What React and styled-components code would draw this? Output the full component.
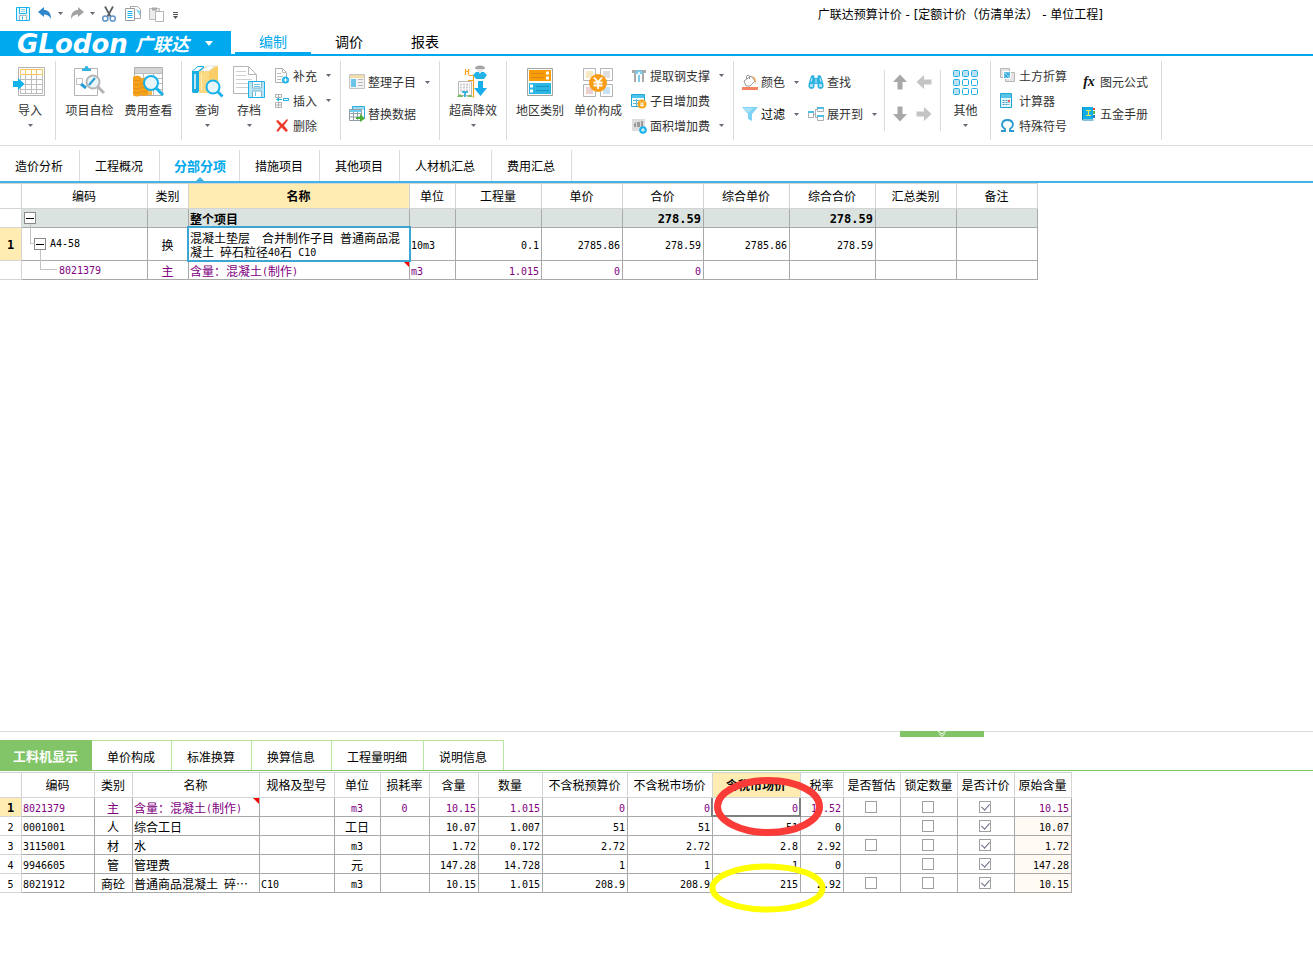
import React from 'react';
import styled, { createGlobalStyle, css } from 'styled-components';

const BLUE = '#00a8ee';
const CYAN = '#19b2ea';
const GREY = '#b4b4b4';
const ORANGE = '#f7a21b';
const HIGHLIGHT = '#ffecb3';
const GREEN = '#82c569';

const GlobalStyle = createGlobalStyle`
  * { box-sizing: border-box; }
  body {
    margin: 0;
    background: #fff;
    color: #000;
    font-family: 'Noto Sans CJK SC', 'Liberation Sans', sans-serif;
    font-size: 12px;
    line-height: 18px;
  }
  button {
    margin: 0;
    padding: 0;
    border: 0;
    background: none;
    font: inherit;
    color: inherit;
    white-space: nowrap;
  }
  svg { display: block; flex: none; }
`;

const Page = styled.div`
  min-height: 100vh;
  display: flex;
  flex-direction: column;
  overflow: hidden;
`;

/* ---------- title bar ---------- */

const TitleBar = styled.header`
  height: 31px;
  display: flex;
  align-items: center;
  padding: 0 210px 4px 15px;
`;
const QuickAccess = styled.div`
  flex: 1;
  display: flex;
  gap: 6px;
`;
const QuickGroup = styled.div`
  display: flex;
  gap: 8px;
`;
const QuickButton = styled.button`
  display: flex;
  align-items: center;
  gap: 5px;
`;
const Title = styled.h1`
  margin: 0;
  padding-top: 2px;
  font-family: 'DejaVu Sans', 'Noto Sans CJK SC', sans-serif;
  font-size: 12px;
  font-weight: 400;
  white-space: pre;
`;

/* ---------- brand and main menu ---------- */

const MenuBar = styled.nav`
  display: flex;
  height: 25px;
  border-bottom: 2px solid ${BLUE};
`;
const Brand = styled.button`
  display: flex;
  align-items: center;
  width: 231px;
  height: 25px;
  padding-left: 17px;
  margin-right: 4px;
  background: ${BLUE};
  color: #fff;
  font-weight: 700;
  font-style: italic;
`;
const BrandLatin = styled.span`
  width: 118px;
  text-align: left;
  font-family: 'DejaVu Sans', sans-serif;
  font-size: 26px;
  line-height: 24px;
`;
const BrandHan = styled.span`
  width: 70px;
  text-align: left;
  font-size: 18px;
  line-height: 24px;
  padding-bottom: 2px;
`;
const MenuTab = styled.button`
  width: 76px;
  height: 23px;
  font-size: 14px;
  line-height: 20px;
  padding-bottom: 2px;
  color: ${(p) => (p.$active ? BLUE : '#000')};
  border-bottom: 2px solid ${(p) => (p.$active ? BLUE : 'transparent')};
`;

/* ---------- ribbon ---------- */

const Ribbon = styled.div`
  display: flex;
  padding: 5px 0;
  height: 90px;
  border-bottom: 1px solid #dcdcdc;
  color: #333;
`;
const Divider = styled.div`
  flex: none;
  width: 1px;
  height: ${(p) => (p.$short ? 61 : 79)}px;
  align-self: center;
  background: #dcdcdc;
`;
const Group = styled.div`
  flex: none;
  display: flex;
  width: ${(p) => p.$w}px;
  padding-left: ${(p) => p.$pad || 0}px;
`;
const Big = styled.button`
  width: ${(p) => p.$w}px;
  height: 79px;
  padding-top: 4px;
  display: flex;
  flex-direction: column;
  align-items: center;
`;
const BigLabel = styled.span`
  margin: 2px 0 5px;
`;
const Stack = styled.div`
  display: flex;
  flex-direction: column;
  padding-top: ${(p) => (p.$rows === 2 ? 5 : 2)}px;
  margin-left: ${(p) => p.$gap || 0}px;
  & > button { height: ${(p) => (p.$rows === 2 ? 32 : 25)}px; }
`;
const Small = styled.button`
  display: flex;
  align-items: center;
  gap: 3px;
  color: ${(p) => (p.$dark ? '#000' : 'inherit')};
`;
const CaretSlot = styled.span`
  margin-left: 6px;
`;
const ArrowPad = styled.div`
  display: grid;
  grid-template-columns: 24px 24px;
  grid-auto-rows: 32px;
  padding-top: 5px;
  & > button { display: grid; place-items: center; }
`;

/* ---------- tab strips ---------- */

const SectionTabs = styled.nav`
  display: flex;
  align-items: flex-end;
  height: 37px;
  border-bottom: 2px solid #41b4e4;
`;
const SectionTab = styled.button`
  position: relative;
  height: 31px;
  padding: 0 ${(p) => (p.$active ? 13 : 16)}px 0 ${(p) => (p.$active ? 14 : 15)}px;
  border-right: 1px solid #dcdcdc;
  ${(p) => p.$active && css`
    color: ${BLUE};
    font-size: 13px;
    font-weight: 700;
    &::after {
      content: '';
      position: absolute;
      left: 50%;
      bottom: 0;
      margin-left: -4px;
      border: 4px solid transparent;
      border-top: 0;
      border-bottom-color: #41b4e4;
    }
  `}
`;
const DetailTabs = styled.nav`
  display: flex;
  height: 31px;
  margin-top: 3px;
  border-bottom: 1px solid ${GREEN};
`;
const DetailTab = styled.button`
  padding: 3px 16px 0 15px;
  border-top: 1px solid #b9e3a0;
  border-right: 1px solid #b9e3a0;
  ${(p) => p.$active && css`
    padding: 1px 13px 0;
    background: ${GREEN};
    border-color: ${GREEN};
    color: #fff;
    font-size: 13px;
    font-weight: 700;
  `}
`;

/* ---------- data tables ---------- */

const Workspace = styled.main`
  flex: 1;
`;
const DetailPanel = styled.section`
  min-height: 226px;
`;
const Splitter = styled.div`
  height: 6px;
  border-top: 1px solid #dcdcdc;
`;
const SplitterGrip = styled.button`
  display: grid;
  place-items: center;
  width: 84px;
  height: 6px;
  margin: -1px 0 0 900px;
  background: ${GREEN};
`;
const TableArea = styled.div`
  position: relative;
  margin-top: ${(p) => p.$gap || 0}px;
`;
const Table = styled.table`
  table-layout: fixed;
  width: ${(p) => p.$w}px;
  border-collapse: separate;
  border-spacing: 0;
  border-top: 1px solid #d4d4d4;
`;
const Th = styled.th`
  height: 25px;
  padding: 0 1px 0 0;
  border-right: 1px solid #d4d4d4;
  border-bottom: 1px solid #d4d4d4;
  font-weight: ${(p) => (p.$active ? 700 : 400)};
  background: ${(p) => (p.$active ? HIGHLIGHT : '#fff')};
  white-space: nowrap;
`;
const Tr = styled.tr`
  height: ${(p) => p.$h || 19}px;
  color: ${(p) => (p.$purple ? '#800080' : '#000')};
  background: ${(p) => (p.$total ? '#dae3df' : '#fff')};
  font-weight: ${(p) => (p.$total ? 700 : 400)};
`;
const Td = styled.td`
  position: relative;
  padding: ${(p) => (p.$box ? '0 2px 0 0' : '2px 2px 0 1px')};
  border-right: 1px solid #a9a9a9;
  border-bottom: 1px solid #a9a9a9;
  line-height: 14px;
  text-align: ${(p) => p.$align || 'left'};
  white-space: pre;
  background: ${(p) => (p.$tint ? '#fffaf4' : 'transparent')};
  ${(p) => p.$editing && css`
    &::after {
      content: '';
      position: absolute;
      inset: -2px;
      border: 2px solid #3ba5d3;
      z-index: 1;
    }
  `}
  ${(p) => p.$focused && css`
    &::after {
      content: '';
      position: absolute;
      inset: 0 -1px -1px -2px;
      border: 2px solid #808080;
      border-top: 0;
    }
  `}
  ${(p) => p.$noted && css`
    &::before {
      content: '';
      position: absolute;
      top: 0;
      right: 0;
      border-top: 6px solid #f00;
      border-left: 6px solid transparent;
    }
  `}
`;
const RowHead = styled.th`
  padding: 2px 0 0;
  border-right: 1px solid #d4d4d4;
  border-bottom: 1px solid #d4d4d4;
  line-height: 14px;
  font-weight: ${(p) => (p.$active ? 700 : 400)};
  color: #000;
  background: ${(p) => (p.$active ? HIGHLIGHT : '#fff')};
`;
const Mono = styled.span`
  font-family: 'DejaVu Sans Mono', monospace;
  font-size: ${(p) => (p.$strong ? 12 : 10)}px;
  line-height: 10px;
  vertical-align: 1px;
`;
const TreeRow = styled.div`
  display: flex;
  align-items: center;
  gap: 4px;
  padding-left: ${(p) => p.$indent}px;
`;
const Expander = styled.button`
  display: grid;
  place-items: center;
  width: 12px;
  height: 12px;
  border: 1px solid #8a8a8a;
  background: #fff;
`;
const Branch = styled.span`
  position: absolute;
  left: ${(p) => p.$x}px;
  top: ${(p) => p.$top || 0}px;
  width: ${(p) => p.$w}px;
  height: ${(p) => p.$h}px;
  border-left: 1px solid #c4c4c4;
  border-bottom: ${(p) => (p.$w > 1 ? '1px solid #c4c4c4' : '0')};
`;
const Check = styled.input`
  appearance: none;
  display: block;
  position: relative;
  width: 12px;
  height: 12px;
  margin: 0 auto;
  border: 1px solid #a0a0a0;
  background: #fff;
  &:checked::after {
    content: '';
    position: absolute;
    left: 3px;
    top: 0;
    width: 4px;
    height: 7px;
    border: solid #6a6f85;
    border-width: 0 1px 1px 0;
    transform: rotate(42deg);
  }
`;
const Marks = styled.svg`
  position: absolute;
  left: 700px;
  top: 0;
  z-index: 2;
  pointer-events: none;
`;

/* ---------- icons ---------- */

const Caret = ({ color = '#666a76' }) => (
  <svg width="5" height="3" viewBox="0 0 5 3"><path d="M0 0h5L2.5 3z" fill={color} /></svg>
);
const Svg = ({ s = 34, children }) => (
  <svg width={s} height={s} viewBox={`0 0 ${s} ${s}`} fill="none">{children}</svg>
);
const Lens = ({ x, y, r = 6.5, len = 12, color = CYAN }) => (
  <g>
    <circle cx={x} cy={y} r={r} fill="#e8f5fb" stroke={color} strokeWidth="2" />
    <path d={`M${x + r * 0.7} ${y + r * 0.7}L${x + len} ${y + len}`} stroke={color} strokeWidth="3" />
  </g>
);

const SaveIcon = () => (
  <Svg s={16}>
    <path d="M1.500 1.500h13v13h-13z" stroke={CYAN} fill="#e3f5fc" />
    <path d="M4.500 2v5.500h7V2" stroke={CYAN} fill="#fff" />
    <path d="M6 3.500h4M6 5.500h4" stroke="#7ccbe8" />
    <path d="M4.500 14v-4.500h7V14" stroke="#a8b4ba" fill="#fff" />
    <path d="M7.500 10.500v3" stroke={CYAN} />
  </Svg>
);
const UndoIcon = ({ flip, color }) => (
  <Svg s={16}>
    <g transform={flip ? 'matrix(-1 0 0 1 16 0)' : undefined}>
      <path d="M1 6l6-5v3c4 0 7 2.500 7 9-2-3.500-4-4.500-7-4.500V11z" fill={color} />
    </g>
  </Svg>
);
const CutIcon = () => (
  <Svg s={16}>
    <path d="M4 0.500l5.500 10M12 0.500l-5.500 10" stroke="#5d6066" strokeWidth="1.800" />
    <circle cx="4.300" cy="12.500" r="2.600" stroke="#5f93c4" strokeWidth="1.500" />
    <circle cx="11.700" cy="12.500" r="2.600" stroke="#5f93c4" strokeWidth="1.500" />
  </Svg>
);
const CopyIcon = () => (
  <Svg s={16}>
    <path d="M5.500 0.500h7l3 3v9h-10z" fill="#fff" stroke="#a9a9a9" />
    <path d="M11 3l4 2v5z" fill="#7fd3f3" />
    <path d="M0.500 2.500h9v12h-9z" fill="#fff" stroke="#9a9a9a" />
    <path d="M2.500 5.500h5M2.500 7.500h5M2.500 9.500h5M2.500 11.500h5" stroke={CYAN} />
  </Svg>
);
const PasteIcon = () => (
  <Svg s={16}>
    <path d="M0.500 2.500h10v11h-10z" fill="#ececec" stroke="#bcbcbc" />
    <path d="M3 1.500h5v3H3z" fill="#a9a9a9" />
    <path d="M6.500 5.500h8v10h-8z" fill="#fff" stroke="#b4b4b4" />
  </Svg>
);
const MoreIcon = () => (
  <Svg s={16}>
    <path d="M0 6.500h5M0 8.500h5" stroke="#555" /><path d="M0 10h5l-2.500 3z" fill="#555" />
  </Svg>
);

const ImportIcon = () => (
  <Svg>
    <path d="M5.500 2.500h26v28h-26z" stroke={GREY} />
    <path d="M7 14.500h23M7 19.500h23M7 24.500h23M7 28.500h23M12.500 10v19M18.500 10v19M23.500 10v19M29.500 10v19M7.500 10v19" stroke="#bdbdbd" />
    <path d="M7.500 4.500h22v5h-22zM12.500 4.500v5M18.500 4.500v5M23.500 4.500v5" stroke="#fbc55c" />
    <path d="M0 16h5v-3l6.500 6-6.500 6v-3H0z" fill="#10b3ea" />
  </Svg>
);
const InspectIcon = () => (
  <Svg>
    <path d="M1.500 3.500h23v27h-23z" stroke={GREY} />
    <path d="M9 6V4q3 0 3.500-3h2q0.500 3 3.500 3v2z" fill="#2fb4e2" />
    <path d="M3.500 13.500h6v6h-6z" stroke="#c0c0c0" />
    <Lens x={20} y={17} len={11} color="#b5b5b5" />
    <path d="M8 19l5 4" stroke="#239fd4" strokeWidth="3" />
    <path d="M16 20l6-7" stroke="#239fd4" strokeWidth="2" />
  </Svg>
);
const CostIcon = () => (
  <Svg>
    <path d="M2.500 2.500h28v28h-28z" fill="#fff" stroke="#b0b0b0" />
    <path d="M3 3h27v5H3z" fill="#d5d5d5" />
    <path d="M3 8.500h27M3 13.500h27M3 18.500h27M3 24.500h27M11.500 8v22M21.500 8v22" stroke="#b9b9b9" />
    <path d="M1 12q4-3 8 0v18q-4 3-8 0zM9 14q4-3 7 0v16q-4 2-7 0z" fill={ORANGE} />
    <path d="M16 24h4v6h-4z" fill="#f7b94b" />
    <path d="M1 15q4 2 8 0M1 19q4 2 8 0M1 23q4 2 8 0M1 27q4 2 8 0M9 18q4 2 7 0M9 22q4 2 7 0M9 26q4 2 7 0" stroke="#d98a18" strokeWidth="0.800" />
    <Lens x={19} y={18} r={7} len={12} />
  </Svg>
);
const QueryIcon = () => (
  <Svg>
    <path d="M2 6l6-5h6v3L9 7v19l-1 2H3l-1-1z" fill="#1aaee4" />
    <path d="M3 6l5-4h5L8 6z" fill="#fff" />
    <path d="M4 9h2v15H4z" fill="#bfe8f7" />
    <path d="M9 7l7-6h12v26l-3 1H10l-1-1z" fill="#fbd882" />
    <path d="M11 6l6-5h8l-6 5z" fill="#fff" stroke="#cfcfcf" strokeWidth="0.500" />
    <path d="M19 7l9-6v25l-9 1z" fill="#fbcd68" />
    <path d="M11.500 9v16" stroke="#fdebbd" />
    <Lens x={23} y={22} r={6.500} len={9.500} />
  </Svg>
);
const ArchiveIcon = () => (
  <Svg>
    <path d="M1.500 1.500h15l8 8v19h-23z" fill="#fff" stroke={GREY} />
    <path d="M16.500 2v7.500H24" stroke={GREY} />
    <path d="M4 6.500h10M4 10.500h10M4 14.500h16M4 18.500h12M4 22.500h12" stroke="#cfcfcf" />
    <path d="M16.500 16.500h16v16h-16z" fill="#b9e6f7" stroke={CYAN} />
    <path d="M20.500 17v6h9v-6M20.500 32v-6h9v6" fill="#fff" stroke="#7fb3c6" />
    <path d="M22 19.500h6M22 21.500h6M23.500 27v4" stroke="#6cc5e6" />
  </Svg>
);
const WorkerIcon = () => (
  <Svg>
    <path d="M9.500 4v6M12.500 4v6M9.500 6.500h3M13 10.500h4.500v22M12 15.500h5" stroke={ORANGE} strokeWidth="1.200" />
    <path d="M2.500 16.500h13v14h-13z" fill="#fff" stroke="#b7b7b7" />
    <path d="M4 19.500h10M4 22.500h10M4 25.500h10" stroke="#cfcfcf" strokeDasharray="2 1" strokeWidth="2" />
    <path d="M6 26h6v2h-2v4H8v-4H6z" fill="#3db6df" />
    <path d="M1 32q2-5 6-1v1zM11 32q3-5 6 0z" fill="#7dbb68" />
    <path d="M19 4q0-3.500 5-3.500T29 4z" fill="#a5a5a5" /><path d="M20 4h8q-1 3-4 3t-4-3z" fill="#e6e6e6" />
    <path d="M17 10l3-3h3l1 2 1-2h3l3 3-3 4h-8z" fill="#23b2e6" />
    <path d="M22 16h5v7h4l-6.500 8-6.500-8h4z" fill="#15aeea" />
  </Svg>
);
const RegionIcon = () => (
  <Svg>
    <path d="M4.500 3.500h25v27h-25z" fill="#fff" stroke="#a4a4a4" />
    <path d="M6 5h22v11H6z" fill="#f99d06" /><path d="M8 8.500h13M8 12.500h13" stroke="#d9861a" />
    <path d="M23 6.500h3v3h-3zM23 11.500h3v3h-3z" fill="#fff" />
    <path d="M6 18h22v11H6z" fill="#2cb6e3" /><path d="M13 21.500h13M13 25.500h13" stroke="#1596c0" />
    <path d="M7 19.500h3v3H7zM7 24.500h3v3H7z" fill="#fff" />
  </Svg>
);
const PriceIcon = () => (
  <Svg>
    {[[3, 3, '#f6e8c0'], [20, 3, '#dedede'], [3, 19, '#edd0d0'], [20, 19, '#c6e2f3']].map(([x, y, c]) => (
      <g key={`${x}-${y}`}>
        <path d={`M${x - 0.5} ${y + 0.5}h12v12h-12z`} fill="#fff" stroke="#b4b4b4" />
        <path d={`M${x + 2} ${y + 3}h7v7h-7z`} fill={c} />
      </g>
    ))}
    <circle cx="17" cy="18" r="9" fill="#f99d15" />
    <path d="M13 12.500l4 4.500 4-4.500M17 17v7M12.500 17.500h9M12.500 20.500h9" stroke="#fff" strokeWidth="1.800" />
  </Svg>
);
const OtherIcon = () => (
  <Svg>
    {[0, 1, 2].map((r) => [0, 1, 2].map((c) => (
      <rect key={`${r}${c}`} x={4.5 + c * 9} y={5.5 + r * 9} width="6" height="6" rx="1"
        fill={c === 0 || r === 0 ? '#bfe0f3' : '#fff'} stroke="#1fb0e6" />
    )))}
  </Svg>
);

const AddDocIcon = () => (
  <Svg s={16}>
    <path d="M1.500 0.500h7l4 4v10h-11z" fill="#fff" stroke="#b0b0b0" /><path d="M8.500 1v3.500h4M3 5.500h4M3 8.500h6M3 11.500h4" stroke="#bdbdbd" />
    <circle cx="11.500" cy="12" r="3.500" fill={CYAN} /><path d="M9.500 12h4M11.500 10v4" stroke="#fff" />
  </Svg>
);
const InsertIcon = () => (
  <Svg s={16}>
    <path d="M1.500 1.500h6v3h-6zM1.500 9.500h6v5h-6zM1.500 12h6M4.500 9.500v5M4.500 1.500v3" stroke="#b0b0b0" />
    <path d="M9.500 5.500h5v2h-5z" stroke="#1fb0e6" /><path d="M3 6.500h5" stroke="#1fb0e6" /><path d="M2 6.500l3-2v4z" fill="#1fb0e6" />
  </Svg>
);
const DeleteIcon = () => (
  <Svg s={16}>
    <path d="M2 3l2-1 4 4 5-5 1 1-4 5.500 4 5-2 1.500-4.500-4.500L4 14l-1.500-1.500L6 8z" fill="#ee3a2c" />
  </Svg>
);
const ArrangeIcon = () => (
  <Svg s={16}>
    <path d="M0.500 0.500h15v14h-15z" fill="#f3f3f3" stroke="#c4c4c4" /><path d="M1 1h14v3H1z" fill="#efdcaa" />
    <path d="M2 5h5v8H2z" fill="#6bc5e9" /><path d="M9 5.500h5M9 8.500h5M9 11.500h5" stroke="#b8b8b8" />
  </Svg>
);
const ReplaceIcon = () => (
  <Svg s={16}>
    <path d="M3.500 0.500h12v12h-12z" fill="#fff" stroke="#2baede" /><path d="M4 1h11v3H4z" fill="#9ddaf0" />
    <path d="M0.500 3.500h12v11h-12zM0.500 7.500h12M0.500 11h12M4.500 4v10M8.500 4v10" fill="#fff" stroke="#8fa0a6" />
    <path d="M1 4h11v2H1z" fill="#6fcbee" /><path d="M7 11h4V8l5 4.500-5 3.500v-3H7z" fill="#4caf35" />
  </Svg>
);
const SteelIcon = () => (
  <Svg s={16}>
    <path d="M1 2h14v3h-2v9h-2V5H5v9H3V5H1z" fill="#a9a9a9" />
    <path d="M4 6q0-4 4-4t4 4H9v8H7V6z" fill="#7bcbe9" /><path d="M7 4h2v3H7z" fill="#e5f6fc" />
  </Svg>
);
const CoinTableIcon = () => (
  <Svg s={16}>
    <path d="M0.500 1.500h13v12h-13z" fill="#fff" stroke="#1fa6d4" /><path d="M1 2h12v3H1z" fill="#4cc4ec" />
    <path d="M2 7.500h7M2 10.500h5M5.500 6v7" stroke="#5ab9d8" /><circle cx="11" cy="11" r="4.500" fill={ORANGE} />
    <path d="M9 8.500l2 2 2-2M11 10.500v3.500M9 11h4M9 12.500h4" stroke="#fff" strokeWidth="0.800" />
  </Svg>
);
const AreaIcon = () => (
  <Svg s={16}>
    <path d="M1 1h13v12H1z" fill="#dcdcdc" /><path d="M3 9V6l2-2v5zM6 9V4h3v5zM10 9V3h2v6z" fill="#9a9a9a" />
    <circle cx="12" cy="12" r="3.800" fill={CYAN} /><path d="M10 12h4M12 10v4" stroke="#fff" />
  </Svg>
);
const ColorIcon = () => (
  <Svg s={16}>
    <path d="M2 7l7-5 4 5-5 5H4z" fill="#fff" stroke="#9a9a9a" /><path d="M4.500 5V2q1.500-2 3 0v3" stroke="#9a9a9a" />
    <path d="M10 2q5 1 3.500 9l-1-5z" fill="#f3a44a" /><path d="M0 13h16v3H0z" fill="#f4845f" />
  </Svg>
);
const FilterIcon = () => (
  <Svg s={16}><path d="M0 1h16l-6 7v7l-4-2V8z" fill="#7ed3f5" /><path d="M1 2h10L7 7" fill="#a8e2f8" /></Svg>
);
const FindIcon = () => (
  <Svg s={16}>
    <path d="M3 2l2-1 1.500 1v2h3V2L11 1l2 1 2.500 8v3q-1 2-3 2t-3-2v-3h-3v3q-1 2-3 2t-3-2v-3z" fill="#2fb2e2" />
    <path d="M2 10h3v3H2zM11 10h3v3h-3z" fill="#a5e0f5" /><path d="M4 4l-1 4M12 4l1 4M8 5v4" stroke="#bdeafa" />
  </Svg>
);
const ExpandIcon = () => (
  <Svg s={16}>
    <path d="M0.500 5.500h5v6h-5zM9.500 1.500h6v4h-6zM9.500 9.500h6v5h-6z" fill="#fff" stroke="#a9b0b4" />
    <path d="M0 5h6v2H0zM9 1h7v2H9zM9 9h7v2H9z" fill="#4dbde8" /><path d="M6 8.500h2M9 3.500H7.500v8H9" stroke="#a9b0b4" />
  </Svg>
);
const EarthIcon = () => (
  <Svg s={16}>
    <path d="M0.500 0.500h9v9h-9zM5.500 4.500h9v9h-9z" fill="#e4e4e4" stroke="#b5b5b5" /><path d="M3.500 3.500h7v7h-7z" fill="#7accec" stroke="#fff" />
    <path d="M4 6l4 4M6 4l4 4M10 4l-6 6" stroke="#1597ca" strokeWidth="0.700" />
  </Svg>
);
const CalcIcon = () => (
  <Svg s={16}>
    <path d="M0.500 0.500h11v14h-11z" fill="#e6f6fc" stroke="#1fa6d4" /><path d="M1 1h10v4H1z" fill="#58c4e8" />
    <path d="M2.500 7.500h7M2.500 9.500h7M2.500 11.500h7" stroke="#3d9cc4" strokeDasharray="2 1" /><path d="M8 7h2v2H8z" fill="#f06050" />
  </Svg>
);
const OmegaIcon = () => (
  <Svg s={16}>
    <path d="M1 13h4v-2Q2 9 2 6.500 2.500 2 7.500 2T13 6.500Q13 9 10 11v2h4" stroke="#2798d0" strokeWidth="1.800" />
  </Svg>
);
const BookIcon = () => (
  <Svg s={16}>
    <path d="M1 1h11v12H1z" fill="#0facea" /><path d="M1.500 1v13h11" stroke="#0b84b8" />
    <path d="M5 4.500h5M5 9.500h5M7.500 4.500v5" stroke="#e8e850" strokeWidth="1.200" />
    <path d="M12 2h2v2h-2z" fill="#e34b3e" /><path d="M12 5h2v3h-2z" fill="#58b947" /><path d="M12 9h2v3h-2z" fill="#2b78c2" />
  </Svg>
);
const FormulaMark = styled.span`
  width: 16px;
  font-family: 'Liberation Serif', serif;
  font-size: 14px;
  font-style: italic;
  font-weight: 700;
  line-height: 16px;
  color: #111;
`;
const ArrowIcon = ({ turn, color }) => (
  <svg width="16" height="16" viewBox="0 0 16 16"><path transform={`rotate(${turn} 8 8)`} d="M8 0.500l7 7.500h-4.500v7.500h-5V8H1z" fill={color} /></svg>
);

/* ---------- composed controls ---------- */

const BigButton = ({ w, icon: Icon, label, caret }) => (
  <Big $w={w}><Icon /><BigLabel>{label}</BigLabel>{caret && <Caret />}</Big>
);
const SmallButton = ({ icon: Icon, label, caret, dark }) => (
  <Small $dark={dark}><Icon /><span>{label}</span>{caret && <CaretSlot><Caret /></CaretSlot>}</Small>
);

/* Latin runs are set in a half-width monospace face beside full-width Han text. */
const Mixed = ({ text, strong }) =>
  text.split(/([\x20-\x7e]+)/).map((part, i) =>
    i % 2 ? <Mono key={i} $strong={strong}>{part}</Mono> : part);

const Minus = () => <svg width="8" height="1"><path d="M0 0.500h8" stroke="#000" /></svg>;

const MAIN_COLS = [
  ['', 22], ['编码', 126], ['类别', 41], ['名称', 221], ['单位', 46], ['工程量', 86], ['单价', 81], ['合价', 81],
  ['综合单价', 86], ['综合合价', 86], ['汇总类别', 81], ['备注', 81],
];
const DETAIL_COLS = [
  ['', 22], ['编码', 73], ['类别', 38], ['名称', 127], ['规格及型号', 75], ['单位', 46], ['损耗率', 49], ['含量', 49],
  ['数量', 64], ['不含税预算价', 85], ['不含税市场价', 85], ['含税市场价', 88], ['税率', 43], ['是否暂估', 57],
  ['锁定数量', 57], ['是否计价', 57], ['原始含量', 57],
];
const DETAIL_ROWS = [
  ['8021379', '主', '含量：混凝土(制作)', '', 'm3', '0', '10.15', '1.015', '0', '0', '0', '16.52', true, '10.15'],
  ['0001001', '人', '综合工日', '', '工日', '', '10.07', '1.007', '51', '51', '51', '0', false, '10.07'],
  ['3115001', '材', '水', '', 'm3', '', '1.72', '0.172', '2.72', '2.72', '2.8', '2.92', true, '1.72'],
  ['9946605', '管', '管理费', '', '元', '', '147.28', '14.728', '1', '1', '1', '0', false, '147.28'],
  ['8021912', '商砼', '普通商品混凝土 碎…', 'C10', 'm3', '', '10.15', '1.015', '208.9', '208.9', '215', '2.92', true, '10.15'],
];
const DETAIL_ALIGN = ['left', 'center', 'left', 'left', 'center', 'center', 'right', 'right', 'right', 'right', 'right', 'right'];

const Head = ({ cols, active }) => (
  <>
    <colgroup>{cols.map(([name, w]) => <col key={name} style={{ width: w }} />)}</colgroup>
    <thead><tr>{cols.map(([name]) => <Th key={name} scope="col" $active={name === active}>{name}</Th>)}</tr></thead>
  </>
);
const Numbers = ({ values, strong }) =>
  values.map((v, i) => <Td key={i} $align="right"><Mixed text={v} strong={strong} /></Td>);

const MainTable = () => (
  <Table $w={1038}>
    <Head cols={MAIN_COLS} active="名称" />
    <tbody>
      <Tr $total>
        <RowHead />
        <Td $box><TreeRow $indent={2}><Expander aria-label="折叠"><Minus /></Expander></TreeRow><Branch $x={8} $top={15} $w={1} $h={4} /></Td>
        <Td /><Td>整个项目</Td><Td />
        <Numbers strong values={['', '', '278.59', '', '278.59', '', '']} />
      </Tr>
      <Tr $h={33}>
        <RowHead $active><Mono $strong>1</Mono></RowHead>
        <Td $box>
          <Branch $x={8} $w={5} $h={16} />
          <TreeRow $indent={12}><Expander aria-label="折叠"><Minus /></Expander><Mixed text="A4-58" /></TreeRow>
          <Branch $x={18} $top={22} $w={1} $h={11} />
        </Td>
        <Td $align="center">换</Td>
        <Td $editing><Mixed text={'混凝土垫层  合并制作子目 普通商品混\n凝土 碎石粒径40石 C10'} /></Td>
        <Td><Mixed text="10m3" /></Td>
        <Numbers values={['0.1', '2785.86', '278.59', '2785.86', '278.59', '', '']} />
      </Tr>
      <Tr $purple>
        <RowHead />
        <Td><Branch $x={18} $w={17} $h={9} /><TreeRow $indent={36}><Mixed text="8021379" /></TreeRow></Td>
        <Td $align="center">主</Td>
        <Td $noted><Mixed text="含量：混凝土(制作)" /></Td>
        <Td><Mixed text="m3" /></Td>
        <Numbers values={['1.015', '0', '0', '', '', '', '']} />
      </Tr>
    </tbody>
  </Table>
);

const DetailTable = () => (
  <Table $w={1072}>
    <Head cols={DETAIL_COLS} active="含税市场价" />
    <tbody>
      {DETAIL_ROWS.map((row, r) => (
        <Tr key={row[0]} $purple={r === 0}>
          <RowHead scope="row" $active={r === 0}><Mono $strong={r === 0}>{r + 1}</Mono></RowHead>
          {row.slice(0, 12).map((v, c) => (
            <Td key={c} $align={DETAIL_ALIGN[c]} $noted={r === 0 && c === 2} $focused={r === 0 && c === 10}>
              <Mixed text={v} />
            </Td>
          ))}
          <Td $box>{row[12] && <Check type="checkbox" aria-label={`是否暂估 ${r + 1}`} />}</Td>
          <Td $box><Check type="checkbox" aria-label={`锁定数量 ${r + 1}`} /></Td>
          <Td $box><Check type="checkbox" aria-label={`是否计价 ${r + 1}`} defaultChecked /></Td>
          <Td $align="right" $tint={r > 0}><Mixed text={row[13]} /></Td>
        </Tr>
      ))}
    </tbody>
  </Table>
);

export default function App() {
  return (
    <Page>
      <GlobalStyle />
      <TitleBar>
        <QuickAccess>
          <QuickButton aria-label="保存"><SaveIcon /></QuickButton>
          <QuickButton aria-label="撤销"><UndoIcon color="#2f86cc" /><Caret /></QuickButton>
          <QuickButton aria-label="恢复"><UndoIcon flip color="#a3a3a3" /><Caret /></QuickButton>
          <QuickGroup>
            <QuickButton aria-label="剪切"><CutIcon /></QuickButton>
            <QuickButton aria-label="复制"><CopyIcon /></QuickButton>
            <QuickButton aria-label="粘贴"><PasteIcon /></QuickButton>
            <QuickButton aria-label="更多"><MoreIcon /></QuickButton>
          </QuickGroup>
        </QuickAccess>
        <Title>广联达预算计价 - [定额计价（仿清单法） - 单位工程]</Title>
      </TitleBar>

      <MenuBar>
        <Brand>
          <BrandLatin>GLodon</BrandLatin>
          <BrandHan>广联达</BrandHan>
          <svg width="8" height="5" viewBox="0 0 8 5"><path d="M0 0h8L4 5z" fill="#fff" /></svg>
        </Brand>
        <MenuTab $active>编制</MenuTab>
        <MenuTab>调价</MenuTab>
        <MenuTab>报表</MenuTab>
      </MenuBar>

      <Ribbon>
        <Group $w={55} $pad={5}><BigButton w={50} icon={ImportIcon} label="导入" caret /></Group>
        <Divider />
        <Group $w={125} $pad={4}>
          <BigButton w={59} icon={InspectIcon} label="项目自检" />
          <BigButton w={59} icon={CostIcon} label="费用查看" />
        </Group>
        <Divider />
        <Group $w={158} $pad={4}>
          <BigButton w={42} icon={QueryIcon} label="查询" caret />
          <BigButton w={42} icon={ArchiveIcon} label="存档" caret />
          <Stack $gap={4}>
            <SmallButton icon={AddDocIcon} label="补充" caret />
            <SmallButton icon={InsertIcon} label="插入" caret />
            <SmallButton icon={DeleteIcon} label="删除" />
          </Stack>
        </Group>
        <Divider />
        <Group $w={98} $pad={8}>
          <Stack $rows={2}>
            <SmallButton icon={ArrangeIcon} label="整理子目" caret />
            <SmallButton icon={ReplaceIcon} label="替换数据" />
          </Stack>
        </Group>
        <Divider />
        <Group $w={66}><BigButton w={66} icon={WorkerIcon} label="超高降效" caret /></Group>
        <Divider />
        <Group $w={226} $pad={4}>
          <BigButton w={58} icon={RegionIcon} label="地区类别" />
          <BigButton w={58} icon={PriceIcon} label="单价构成" />
          <Stack $gap={4}>
            <SmallButton icon={SteelIcon} label="提取钢支撑" caret />
            <SmallButton icon={CoinTableIcon} label="子目增加费" />
            <SmallButton icon={AreaIcon} label="面积增加费" caret />
          </Stack>
        </Group>
        <Divider />
        <Group $w={150} $pad={8}>
          <Stack $rows={2}>
            <SmallButton icon={ColorIcon} label="颜色" caret />
            <SmallButton icon={FilterIcon} label="过滤" caret dark />
          </Stack>
          <Stack $rows={2} $gap={9}>
            <SmallButton icon={FindIcon} label="查找" />
            <SmallButton icon={ExpandIcon} label="展开到" caret />
          </Stack>
        </Group>
        <Divider $short />
        <Group $w={55} $pad={3}>
          <ArrowPad>
            <button aria-label="上移"><ArrowIcon turn={0} color="#a8a8a8" /></button>
            <button aria-label="左移"><ArrowIcon turn={-90} color="#c4c4c4" /></button>
            <button aria-label="下移"><ArrowIcon turn={180} color="#a8a8a8" /></button>
            <button aria-label="右移"><ArrowIcon turn={90} color="#c4c4c4" /></button>
          </ArrowPad>
        </Group>
        <Divider $short />
        <Group $w={49}><BigButton w={49} icon={OtherIcon} label="其他" caret /></Group>
        <Divider />
        <Group $w={170} $pad={9}>
          <Stack>
            <SmallButton icon={EarthIcon} label="土方折算" />
            <SmallButton icon={CalcIcon} label="计算器" />
            <SmallButton icon={OmegaIcon} label="特殊符号" />
          </Stack>
          <Stack $rows={2} $gap={14}>
            <Small><FormulaMark>fx</FormulaMark><span>图元公式</span></Small>
            <SmallButton icon={BookIcon} label="五金手册" />
          </Stack>
        </Group>
        <Divider />
      </Ribbon>

      <SectionTabs>
        {['造价分析', '工程概况', '分部分项', '措施项目', '其他项目', '人材机汇总', '费用汇总'].map((t) => (
          <SectionTab key={t} $active={t === '分部分项'}>{t}</SectionTab>
        ))}
      </SectionTabs>

      <Workspace><MainTable /></Workspace>

      <DetailPanel>
        <Splitter>
          <SplitterGrip aria-label="收起">
            <svg width="10" height="6" viewBox="0 0 10 6" fill="none"><path d="M1 0l4 3 4-3M2 2.500l3 3 3-3" stroke="#fff" /></svg>
          </SplitterGrip>
        </Splitter>
        <DetailTabs>
          {['工料机显示', '单价构成', '标准换算', '换算信息', '工程量明细', '说明信息'].map((t) => (
            <DetailTab key={t} $active={t === '工料机显示'}>{t}</DetailTab>
          ))}
        </DetailTabs>
        <TableArea $gap={1}>
          <DetailTable />
          <Marks width="130" height="145" viewBox="0 0 130 145" fill="none">
            <ellipse cx="68.500" cy="34.500" rx="51" ry="26" stroke="#fb3b38" strokeWidth="7" />
            <ellipse cx="67.500" cy="116" rx="55" ry="21.500" stroke="#ff0" strokeWidth="6" />
          </Marks>
        </TableArea>
      </DetailPanel>
    </Page>
  );
}
